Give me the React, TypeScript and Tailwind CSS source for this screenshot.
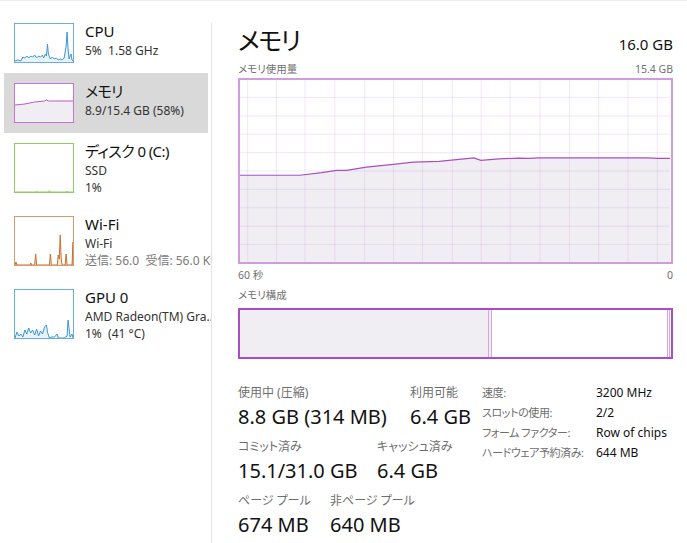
import React from 'react';

const FONT = "[font-family:'Noto_Sans','Noto_Sans_CJK_JP',sans-serif] [font-feature-settings:'palt']";

type Thumb = {
  h: number;
  border: string;
  stroke: string;
  fill: string;
  points: string;
};

const thumbs: Record<string, Thumb> = {
  cpu: {
    h: 40,
    border: 'border-[#6aaedf]',
    stroke: '#3d95d3',
    fill: '#e8f2fa',
    points:
      '0,37 3,36 6,37 8,33 10,34 12,32 14,34 16,32 18,33 20,31 22,34 24,32 26,33 28,31 29,34 31,30 32,32 33,20 34,30 36,35 38,33 40,35 42,34 44,36 46,35 48,36 50,34 52,22 53,8 54,25 55,35 56,32 57,30 58,36 59,37',
  },
  mem: {
    h: 40,
    border: 'border-[#c475d6]',
    stroke: '#b05cc8',
    fill: '#f1eef3',
    points: '0,21 10,20 20,18 30,17 32,16 34,17 59,17',
  },
  disk: {
    h: 50,
    border: 'border-[#8fcc63]',
    stroke: '#8fcc63',
    fill: '#f2f9ec',
    points: '0,48 21,48 22,47 23,48 34,48 35,46.5 36,48 52,48 53,47 54,48 59,48',
  },
  wifi: {
    h: 50,
    border: 'border-[#d69a6b]',
    stroke: '#c46f2c',
    fill: '#f7e8dc',
    points:
      '0,48 1,45 2,48 15,48 16,46 17,48 20,48 21,37 22,48 35,48 36,37 37,48 43,48 44,38 45,42 46,18 47,42 48,48 51,48 52,37 53,48 58,48 59,25 59,48',
  },
  gpu: {
    h: 50,
    border: 'border-[#6aaedf]',
    stroke: '#3d95d3',
    fill: '#e8f2fa',
    points:
      '0,48 2,42 4,46 6,44 8,47 10,40 12,44 14,38 16,43 18,40 20,45 22,39 24,46 26,41 28,44 30,37 32,35 33,42 35,48 37,47 40,47 43,44 44,48 50,48 53,46 54,30 56,47 58,44 59,48',
  },
};

function Sparkline({ t }: { t: Thumb }) {
  const ih = t.h - 2;
  return (
    <div className={`w-[60px] shrink-0 border bg-white ${t.border}`} style={{ height: t.h }}>
      <svg width="58" height={ih} viewBox={`0 0 59 ${ih}`} preserveAspectRatio="none" className="block">
        <polygon points={`0,${ih} ${t.points} 59,${ih}`} fill={t.fill} />
        <polyline points={t.points} fill="none" stroke={t.stroke} strokeWidth="1" />
      </svg>
    </div>
  );
}

function SideItem({
  k,
  title,
  lines,
  selected,
  tight,
}: {
  k: string;
  title: string;
  lines: { text: string; gray?: boolean }[];
  selected?: boolean;
  tight?: boolean;
}) {
  const t = thumbs[k];
  return (
    <div className={`flex gap-[11px] pl-[10px] py-[10px] ${selected ? 'bg-[#d9d9d9]' : ''}`}>
      <Sparkline t={t} />
      <div className="flex-1 whitespace-pre">
        <div className={`text-[15px] leading-[19px] text-[#111] -mt-[1px] ${tight ? 'tracking-[-0.6px]' : ''}`}>{title}</div>
        {lines.map((l, i) => (
          <div
            key={i}
            className={`text-[12px] leading-[17px] ${l.gray ? 'text-[#7a7a7a]' : 'text-[#333]'} ${i === 0 ? 'mt-[1px]' : ''}`}
          >
            {l.text}
          </div>
        ))}
      </div>
    </div>
  );
}

const vLines = [8.7, 37.7, 66.3, 96.3, 126.3, 155.3, 184.3, 214.3, 243.3, 272.3, 302.3, 332, 361.3, 390.7, 420.3];
const usage =
  '0,96.3 60,96.3 82,93.7 97,91.3 107,91.3 127,88 154,85.3 174,83 200,82.3 220,80.3 235,78.7 242,81.3 260,79.7 280,79 290,79.3 300,78.7 410,78.7 420,79.3 434,79.3';

function UsageGraph() {
  return (
    <div className="h-[186px] border-2 border-[#cf9cde] bg-white">
      <svg width="430" height="182" viewBox="0 0 432 184" preserveAspectRatio="none" className="block">
        <polygon points={`0,184 ${usage} 434,184`} fill="#f1eef3" />
        {vLines.map((x) => (
          <line key={x} x1={x - 1} y1="0" x2={x - 1} y2="184" stroke="#c98fd8" strokeOpacity="0.22" strokeWidth="1" />
        ))}
        {[1, 2, 3, 4, 5, 6, 7, 8, 9].map((i) => (
          <line key={i} x1="0" y1={i * 18.6 - 1} x2="432" y2={i * 18.6 - 1} stroke="#c98fd8" strokeOpacity="0.22" strokeWidth="1" />
        ))}
        <polyline points={usage} fill="none" stroke="#a94fc6" strokeWidth="1.2" />
      </svg>
    </div>
  );
}

function Stat({ label, value, w }: { label: string; value: string; w?: string }) {
  return (
    <div className={`${w ?? ''} whitespace-nowrap`}>
      <div className="text-[12px] leading-[16px] text-[#6e6e6e]">{label}</div>
      <div className="text-[20px] leading-[28px] text-[#111] mt-[2px]">{value}</div>
    </div>
  );
}

export default function App() {
  return (
    <div className={`w-[687px] h-[543px] overflow-hidden bg-white border-t border-[#eeeeee] flex ${FONT}`}>
      {/* sidebar */}
      <div className="w-[211px] shrink-0 overflow-hidden pt-[12px] pl-[4px] pr-[3px]">
        <SideItem k="cpu" title="CPU" lines={[{ text: '5%  1.58 GHz' }]} />
        <SideItem k="mem" title="メモリ" lines={[{ text: '8.9/15.4 GB (58%)' }]} selected tight />
        <SideItem k="disk" title="ディスク 0 (C:)" lines={[{ text: 'SSD' }, { text: '1%' }]} tight />
        <SideItem k="wifi" title="Wi-Fi" lines={[{ text: 'Wi-Fi' }, { text: '送信: 56.0  受信: 56.0 Kbps', gray: true }]} />
        <SideItem k="gpu" title="GPU 0" lines={[{ text: 'AMD Radeon(TM) Gra...' }, { text: '1%  (41 °C)' }]} />
      </div>
      <div className="w-px bg-[#e3e3e3] mt-[22px] shrink-0" />

      {/* main */}
      <div className="flex-1 pl-[26px] pr-[14px]">
        <div className="flex items-baseline justify-between mt-[19px]">
          <div className="text-[25px] leading-[40px] tracking-[-1.5px] text-[#111]">メモリ</div>
          <div className="text-[15px] text-[#111]">16.0 GB</div>
        </div>
        <div className="flex justify-between text-[10.5px] leading-[14px] text-[#707070] mt-[2px]">
          <span>メモリ使用量</span>
          <span>15.4 GB</span>
        </div>
        <div className="mt-[2px]">
          <UsageGraph />
        </div>
        <div className="flex justify-between text-[10.5px] leading-[14px] text-[#707070] mt-[4px]">
          <span>60 秒</span>
          <span>0</span>
        </div>
        <div className="text-[10.5px] leading-[14px] text-[#707070] mt-[6px]">メモリ構成</div>
        <div className="h-[51px] mt-[6px] border-2 border-[#a94cc6] flex">
          <div className="w-[248px] bg-[#f1eef3]" />
          <div className="w-[4px] border-x border-[#d2a6de] bg-[#f1eef3]" />
          <div className="flex-1 bg-white" />
          <div className="w-[3px] border-x border-[#d2a6de]" />
          <div className="w-[1px]" />
        </div>

        {/* stats */}
        <div className="flex items-start mt-[26px]">
          <div className="w-[244px] shrink-0 flex flex-col gap-[8px]">
            <div className="flex">
              <Stat w="w-[172px]" label="使用中 (圧縮)" value="8.8 GB (314 MB)" />
              <Stat label="利用可能" value="6.4 GB" />
            </div>
            <div className="flex">
              <Stat w="w-[139px]" label="コミット済み" value="15.1/31.0 GB" />
              <Stat label="キャッシュ済み" value="6.4 GB" />
            </div>
            <div className="flex">
              <Stat w="w-[92px]" label="ページ プール" value="674 MB" />
              <Stat label="非ページ プール" value="640 MB" />
            </div>
          </div>
          <div className="grid grid-cols-[114px_auto] content-start text-[12px] leading-[20px] whitespace-nowrap -mt-[2px]">
            <span className="text-[#6e6e6e] text-[11px] tracking-[-0.4px]">速度:</span>
            <span className="text-[#111]">3200 MHz</span>
            <span className="text-[#6e6e6e] text-[11px] tracking-[-0.4px]">スロットの使用:</span>
            <span className="text-[#111]">2/2</span>
            <span className="text-[#6e6e6e] text-[11px] tracking-[-0.4px]">フォーム ファクター:</span>
            <span className="text-[#111]">Row of chips</span>
            <span className="text-[#6e6e6e] text-[11px] tracking-[-0.4px]">ハードウェア予約済み:</span>
            <span className="text-[#111]">644 MB</span>
          </div>
        </div>
      </div>
    </div>
  );
}
